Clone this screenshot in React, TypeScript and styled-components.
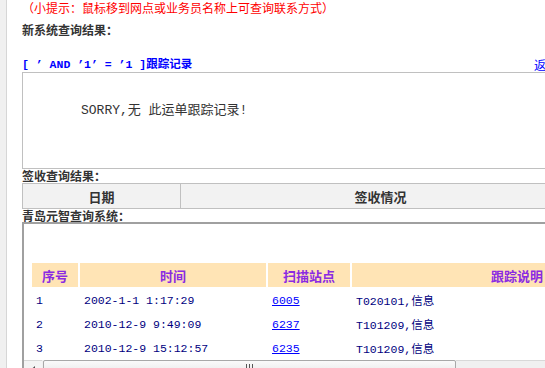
import React from "react";
import styled, { createGlobalStyle } from "styled-components";

const GlobalStyle = createGlobalStyle`
  html, body {
    margin: 0;
    padding: 0;
    background: #ffffff;
    overflow: hidden;
  }
  body {
    font-family: "Noto Sans CJK SC", "Liberation Sans", sans-serif;
    font-size: 12px;
    color: #333333;
  }
`;

const Page = styled.div`
  display: flex;
  align-items: stretch;
  min-height: 368px;
  width: 700px;
`;

const FrameEdge = styled.div`
  width: 6px;
  flex-shrink: 0;
  background: #f0f0f0;
  border-right: 1px solid #d6d6d6;
`;

const Content = styled.div`
  width: 558px;
  flex-shrink: 0;
  padding-left: 15px;
  display: flex;
  flex-direction: column;
`;

const Tip = styled.div`
  height: 16px;
  line-height: 16px;
  color: #ff0000;
  font-size: 12px;
  white-space: nowrap;
`;

const SectionTitle = styled.div<{ $top?: number; $h?: number }>`
  margin-top: ${(p) => p.$top ?? 0}px;
  height: ${(p) => p.$h ?? 14}px;
  line-height: ${(p) => p.$h ?? 14}px;
  font-weight: bold;
  font-size: 12px;
  color: #333333;
  white-space: nowrap;
`;

const TraceHeader = styled.div`
  margin-top: 20px;
  height: 14px;
  display: flex;
  align-items: center;
`;

const TraceTitle = styled.div`
  flex: 1;
  font-family: "Liberation Mono", "Noto Sans CJK SC", monospace;
  font-size: 11.5px;
  font-weight: bold;
  color: #0000ff;
  line-height: 14px;
  white-space: nowrap;
`;

const BackLink = styled.a`
  width: 46px;
  color: #0000ff;
  font-size: 12px;
  line-height: 14px;
  text-decoration: none;
  white-space: nowrap;
`;

const ResultBox = styled.div`
  height: 95px;
  border: 1px solid #c0c0c0;
  padding: 30px 0 0 58px;
  box-sizing: content-box;
  padding-bottom: 0;
  height: 65px;
`;

const EmptyMsg = styled.div`
  font-family: "Liberation Mono", "Noto Sans CJK SC", monospace;
  font-size: 13px;
  line-height: 16px;
  color: #333333;
  white-space: nowrap;
`;

const SignTable = styled.table`
  width: 558px;
  border-collapse: collapse;
  table-layout: fixed;
  border: 1px solid #c0c0c0;
`;

const SignHead = styled.th`
  height: 24px;
  padding: 0;
  background: #f2f2f2;
  border: 1px solid #c0c0c0;
  font-size: 13px;
  font-weight: bold;
  color: #333333;
  text-align: center;
`;

const InnerFrame = styled.div`
  width: 556px;
  border-top: 2px solid #a0a0a0;
  border-left: 2px solid #a0a0a0;
  border-right: 2px solid #e4e4e4;
  background: #ffffff;
`;

const Viewport = styled.div`
  height: 136px;
  overflow: hidden;
  padding: 37px 0 0 6px;
  box-sizing: border-box;
`;

const TraceTable = styled.table`
  width: 654px;
  border-collapse: separate;
  border-spacing: 2px;
  table-layout: fixed;
`;

const HeadCell = styled.th`
  height: 24px;
  padding: 0;
  background: #ffe4b5;
  color: #8a2be2;
  font-size: 13px;
  font-weight: bold;
  text-align: center;
  white-space: nowrap;
`;

const DataCell = styled.td`
  height: 22px;
  padding: 0 0 0 4px;
  font-family: "Liberation Mono", "Noto Sans CJK SC", monospace;
  font-size: 11.5px;
  color: #000080;
  white-space: nowrap;
`;

const StationLink = styled.a`
  color: #0000ff;
  text-decoration: underline;
`;

const ScrollBar = styled.div`
  height: 17px;
  display: flex;
  align-items: stretch;
  background: #f0f0f0;
`;

const ArrowButton = styled.div`
  width: 18px;
  display: flex;
  align-items: center;
  justify-content: center;
  background: #f4f4f4;
  border-top: 1px solid #d8d8d8;
`;

const Thumb = styled.div`
  width: 411px;
  margin-left: 1px;
  border: 1px solid #a8a8a8;
  border-radius: 2px;
  background: linear-gradient(#fafafa, #e6e6e6);
  display: flex;
  justify-content: center;
  padding-top: 3px;
`;

const Grip = styled.svg`
  display: block;
`;

const Track = styled.div`
  flex: 1;
  border-top: 1px solid #d8d8d8;
`;

const rows = [
  { no: "1", time: "2002-1-1 1:17:29", station: "6005", desc: "T020101,信息" },
  { no: "2", time: "2010-12-9 9:49:09", station: "6237", desc: "T101209,信息" },
  { no: "3", time: "2010-12-9 15:12:57", station: "6235", desc: "T101209,信息" },
];

export default function App() {
  return (
    <>
      <GlobalStyle />
      <Page>
        <FrameEdge />
        <Content>
          <Tip>（小提示：鼠标移到网点或业务员名称上可查询联系方式）</Tip>
          <SectionTitle $top={6} $h={16}>
            新系统查询结果：
          </SectionTitle>
          <TraceHeader>
            <TraceTitle>[ ’ AND ’1’ = ’1 ]跟踪记录</TraceTitle>
            <BackLink href="#">返回</BackLink>
          </TraceHeader>
          <ResultBox>
            <EmptyMsg>SORRY,无 此运单跟踪记录!</EmptyMsg>
          </ResultBox>
          <SectionTitle>签收查询结果：</SectionTitle>
          <SignTable>
            <colgroup>
              <col width={158} />
              <col width={400} />
            </colgroup>
            <thead>
              <tr>
                <SignHead>日期</SignHead>
                <SignHead>签收情况</SignHead>
              </tr>
            </thead>
          </SignTable>
          <SectionTitle $h={13}>青岛元智查询系统：</SectionTitle>
          <InnerFrame>
            <Viewport>
              <TraceTable>
                <colgroup>
                  <col width={46} />
                  <col width={186} />
                  <col width={82} />
                  <col width={330} />
                </colgroup>
                <thead>
                  <tr>
                    <HeadCell>序号</HeadCell>
                    <HeadCell>时间</HeadCell>
                    <HeadCell>扫描站点</HeadCell>
                    <HeadCell>跟踪说明</HeadCell>
                  </tr>
                </thead>
                <tbody>
                  {rows.map((r) => (
                    <tr key={r.no}>
                      <DataCell>{r.no}</DataCell>
                      <DataCell>{r.time}</DataCell>
                      <DataCell>
                        <StationLink href="#">{r.station}</StationLink>
                      </DataCell>
                      <DataCell>{r.desc}</DataCell>
                    </tr>
                  ))}
                </tbody>
              </TraceTable>
            </Viewport>
            <ScrollBar>
              <ArrowButton>
                <svg width="4" height="7" viewBox="0 0 4 7">
                  <path d="M4 0 L0 3.5 L4 7 Z" fill="#4d4d4d" />
                </svg>
              </ArrowButton>
              <Thumb>
                <Grip width="7" height="7" viewBox="0 0 7 7">
                  <path d="M0.5 0 V7 M3.5 0 V7 M6.5 0 V7" stroke="#555" strokeWidth="1" />
                </Grip>
              </Thumb>
              <Track />
            </ScrollBar>
          </InnerFrame>
        </Content>
      </Page>
    </>
  );
}
